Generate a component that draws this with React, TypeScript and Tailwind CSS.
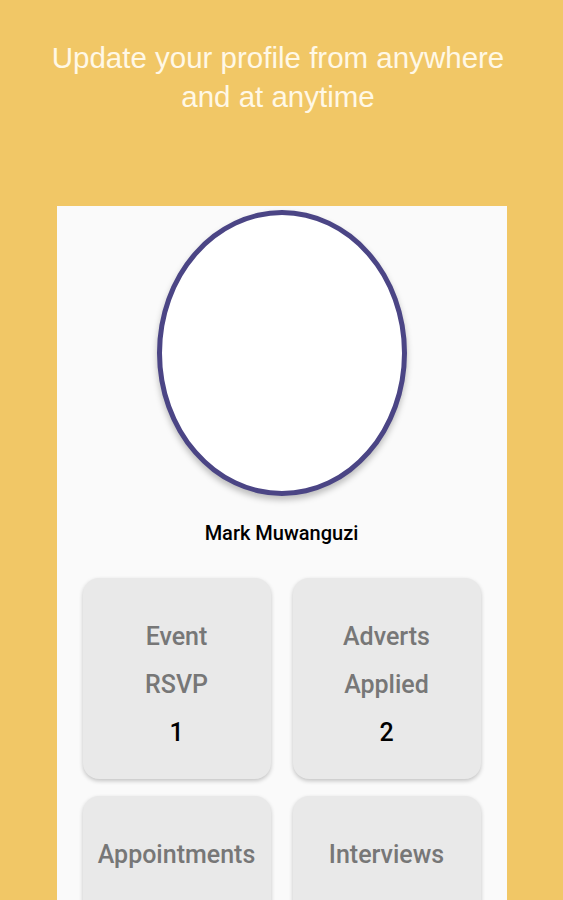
const stats = [
  { label: ["Event", "RSVP"], value: "1" },
  { label: ["Adverts", "Applied"], value: "2" },
  { label: ["Appointments"], value: "" },
  { label: ["Interviews"], value: "" },
];

function StatCard({ label, value }: { label: string[]; value: string }) {
  return (
    <div className="flex h-[201px] flex-col items-center rounded-[16px] bg-[#e9e9e9] pt-[35px] shadow-[0_2px_4px_rgba(0,0,0,0.22)]">
      {label.map((line, i) => (
        <p key={i} className="h-[48px] text-[25px] leading-[48px] font-medium text-[#777777]">
          {line}
        </p>
      ))}
      {value && <p className="text-[25px] leading-[48px] font-medium text-black">{value}</p>}
    </div>
  );
}

export default function App() {
  return (
    <div
      className="flex min-h-screen flex-col items-center bg-[#f1c766]"
      style={{ fontFamily: "Roboto, 'Noto Sans', sans-serif" }}
    >
      <h1 className="pr-[7px] pt-[38px] text-center font-['Liberation_Sans',Arial,sans-serif] text-[29.5px] leading-[39px] font-normal text-[#fff8e6]">
        Update your profile from anywhere
        <br />
        and at anytime
      </h1>

      <div className="mt-[90px] flex w-[450px] flex-1 flex-col items-center bg-[#fafafa] pb-10">
        <div className="mt-[4px] h-[286px] w-[250px] rounded-[50%] border-[5px] border-[#4b4585] bg-white shadow-[0_4px_6px_rgba(0,0,0,0.25)]" />

        <p className="mt-[25px] text-[20px] leading-[24px] font-medium text-black">
          Mark Muwanguzi
        </p>

        <div className="mt-[33px] grid w-full grid-cols-2 gap-x-[22px] gap-y-[17px] px-[26px]">
          {stats.map((s) => (
            <StatCard key={s.label[0]} label={s.label} value={s.value} />
          ))}
        </div>
      </div>
    </div>
  );
}
